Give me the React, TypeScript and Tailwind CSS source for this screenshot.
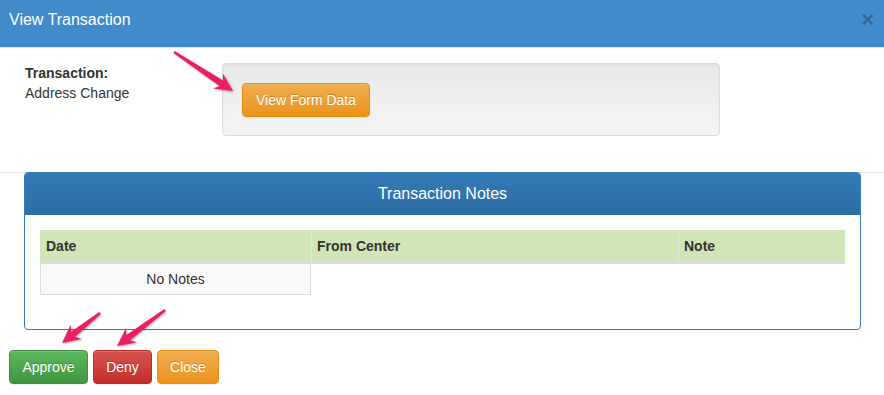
import React from "react"

type Pt = [number, number]

// tapered callout arrow from tail to tip
function arrowPoints(tail: Pt, tip: Pt) {
  const dx = tip[0] - tail[0]
  const dy = tip[1] - tail[1]
  const len = Math.hypot(dx, dy)
  const d: Pt = [dx / len, dy / len]
  const n: Pt = [-d[1], d[0]]
  const head = 18
  const wing = 9
  const base: Pt = [tip[0] - d[0] * head, tip[1] - d[1] * head]
  const neck: Pt = [tip[0] - d[0] * (head - 4), tip[1] - d[1] * (head - 4)]
  const pts: Pt[] = [
    [tail[0] + n[0] * 1.1, tail[1] + n[1] * 1.1],
    [neck[0] + n[0] * 3.2, neck[1] + n[1] * 3.2],
    [base[0] + n[0] * wing, base[1] + n[1] * wing],
    tip,
    [base[0] - n[0] * wing, base[1] - n[1] * wing],
    [neck[0] - n[0] * 3.2, neck[1] - n[1] * 3.2],
    [tail[0] - n[0] * 1.1, tail[1] - n[1] * 1.1],
  ]
  return pts.map((p) => `${p[0].toFixed(1)},${p[1].toFixed(1)}`).join(" ")
}

const arrows: [Pt, Pt][] = [
  [[174, 52], [233, 91]],
  [[100, 313], [62, 343]],
  [[165, 310], [117, 346]],
]

const btn =
  "h-[34px] rounded-[4px] border text-[14px] leading-[20px] text-white text-center [text-shadow:0_-1px_0_rgba(0,0,0,0.2)] shadow-[inset_0_1px_0_rgba(255,255,255,0.15),0_1px_1px_rgba(0,0,0,0.075)]"

export default function App() {
  return (
    <div
      className="relative w-[884px] h-[395px] bg-white text-[14px] text-[#333] overflow-hidden"
      style={{ fontFamily: '"Liberation Sans", Arial, sans-serif' }}
    >
      {/* Modal header */}
      <div className="h-[48px] bg-[#428bca] border-b border-[#e5e5e5] flex items-start justify-between pl-[9px] pr-[10px] pt-[10px]">
        <h4 className="text-[16px] leading-[20px] text-white">View Transaction</h4>
        <span className="text-[22px] font-bold leading-[20px] text-black opacity-25">×</span>
      </div>

      {/* Modal body */}
      <div className="h-[124px] flex pl-[25px] pt-[15px]">
        <div className="w-[197px] leading-[20px]">
          <div className="font-bold">Transaction:</div>
          <div>Address Change</div>
        </div>
        <div className="w-[498px] h-[73px] rounded-[4px] border border-[#dcdcdc] bg-gradient-to-b from-[#e8e8e8] to-[#f5f5f5] shadow-[inset_0_1px_3px_rgba(0,0,0,0.05)] pt-[19px] pl-[19px]">
          <button className={`${btn} w-[128px] bg-gradient-to-b from-[#f0ad4e] to-[#eb9316] border-[#e38d13]`}>
            View Form Data
          </button>
        </div>
      </div>

      {/* Notes panel */}
      <div className="border-t border-[#e5e5e5]">
        <div className="-mt-px ml-[24px] mr-[23px] border border-[#337ab7] rounded-[4px] overflow-hidden">
          <div className="h-[42px] bg-gradient-to-b from-[#337ab7] to-[#2e6da4] flex items-center justify-center text-[16px] text-white">
            Transaction Notes
          </div>
          <div className="px-[15px] pt-[15px] pb-[34px]">
            <div className="grid grid-cols-[271px_367px_1fr] h-[34px] bg-[#d0e6b8] border-b-2 border-[#dddddd] font-bold">
              <div className="flex items-center px-[6px]">Date</div>
              <div className="flex items-center px-[5px] border-l border-[#e3eadb]">From Center</div>
              <div className="flex items-center px-[5px] border-l border-[#e3eadb]">Note</div>
            </div>
            <div className="grid grid-cols-[271px_367px_1fr]">
              <div className="h-[31px] flex items-center justify-center bg-[#f9f9f9] border-x border-b border-[#dddddd]">
                No Notes
              </div>
            </div>
          </div>
        </div>
      </div>

      {/* Footer buttons */}
      <div className="flex gap-[5px] pl-[9px] mt-[20px]">
        <button className={`${btn} w-[79px] bg-gradient-to-b from-[#5cb85c] to-[#419641] border-[#3e8f3e]`}>Approve</button>
        <button className={`${btn} w-[59px] bg-gradient-to-b from-[#d9534f] to-[#c12e2a] border-[#b92c28]`}>Deny</button>
        <button className={`${btn} w-[62px] bg-gradient-to-b from-[#f0ad4e] to-[#eb9316] border-[#e38d13]`}>Close</button>
      </div>

      {/* Annotation arrows */}
      <svg
        className="absolute inset-0 pointer-events-none drop-shadow-[1px_1px_1px_rgba(0,0,0,0.35)]"
        width="884"
        height="395"
      >
        {arrows.map(([t, p], i) => (
          <polygon key={i} points={arrowPoints(t, p)} fill="#ec1d63" />
        ))}
      </svg>
    </div>
  )
}
